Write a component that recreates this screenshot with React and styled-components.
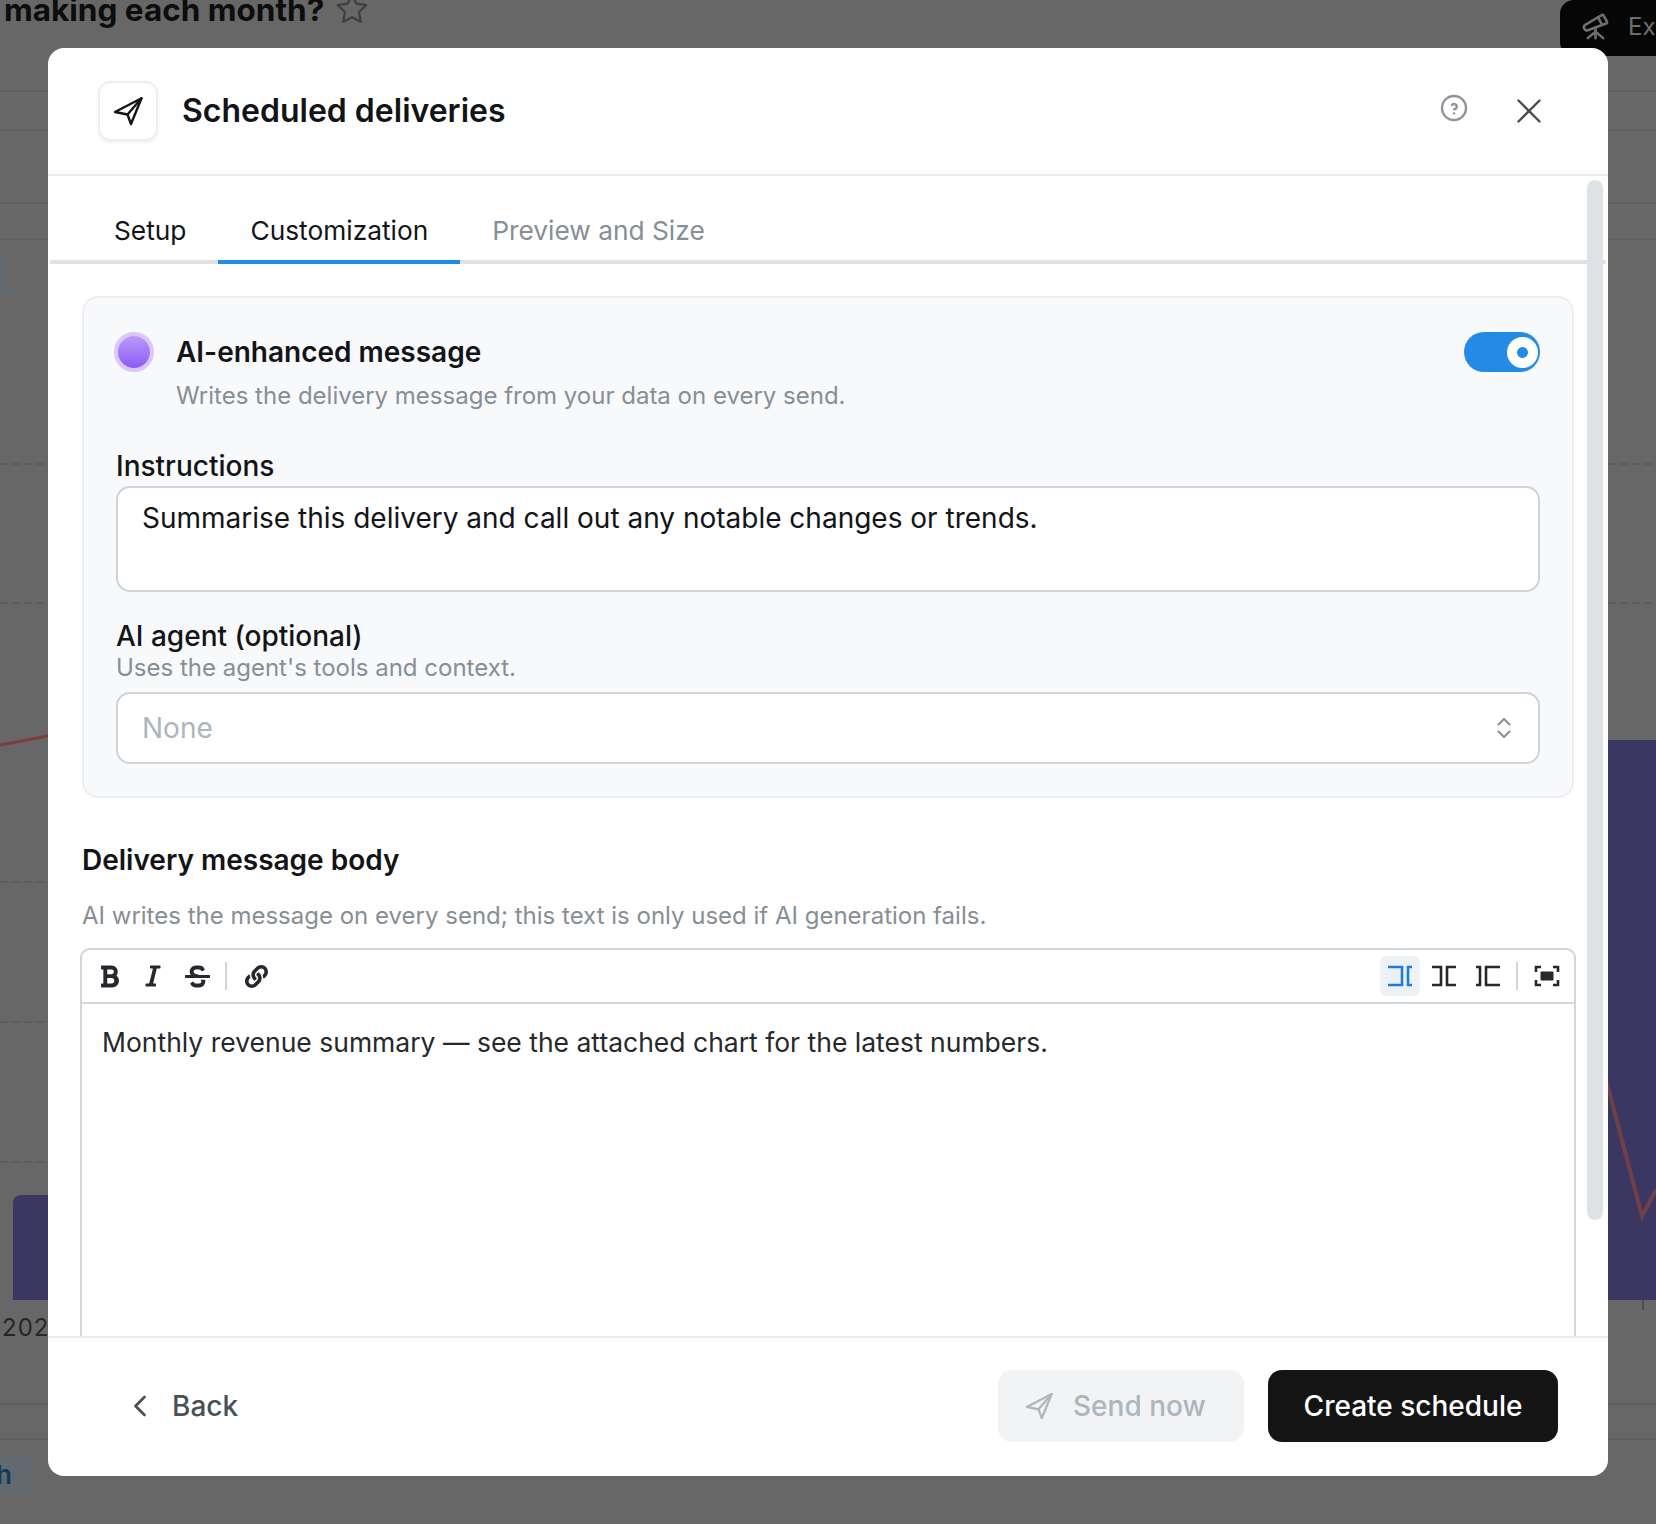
import React from 'react';
import styled, { createGlobalStyle } from 'styled-components';
import { FaBold, FaItalic, FaStrikethrough, FaLink } from 'react-icons/fa';
import { TbTelescope, TbStar, TbHelpCircle, TbX, TbChevronLeft } from 'react-icons/tb';

const GlobalStyle = createGlobalStyle`
  html, body {
    margin: 0;
    padding: 0;
    background: #676767;
  }
  * {
    box-sizing: border-box;
  }
`

const Page = styled.div`
  position: relative;
  width: 1656px;
  height: 1524px;
  overflow: hidden;
  background: #676767;
  font-family: Inter, "Noto Sans", sans-serif;
`

const TopRow = styled.div`
  height: 56px;
  display: flex;
  justify-content: space-between;
`

const PageTitle = styled.h1`
  margin: -13px 0 0 4px;
  height: 44px;
  display: flex;
  align-items: center;
  gap: 11px;
  font-size: 31.5px;
  font-weight: 700;
  color: #0d0d0d;
  white-space: nowrap;
  svg {
    color: #3f3f3f;
  }
`

const ExploreButton = styled.div`
  width: 96px;
  height: 56px;
  background: #060606;
  border-radius: 0 0 0 14px;
  border-top-left-radius: 14px;
  display: flex;
  align-items: center;
  gap: 17px;
  padding: 0 0 4px 20px;
  font-size: 24px;
  color: #6e6e6e;
`

const Chart = styled.svg`
  display: block;
  width: 1656px;
  height: 1400px;
`

const ChipRow = styled.div`
  height: 68px;
  display: flex;
  align-items: flex-start;
`

const Chip = styled.div`
  width: 34px;
  height: 39px;
  background: #62696f;
  border-radius: 0 8px 8px 0;
  font-size: 26px;
  font-weight: 600;
  line-height: 37px;
  color: #0f3a5e;
  text-indent: -4px;
  overflow: hidden;
`

const Modal = styled.div`
  position: absolute;
  top: 48px;
  left: 48px;
  width: 1560px;
  height: 1428px;
  background: #fff;
  border-radius: 16px;
  display: flex;
  flex-direction: column;
  overflow: hidden;
  color: #121417;
`

const Header = styled.header`
  height: 128px;
  flex-shrink: 0;
  display: flex;
  align-items: center;
  padding: 0 58px 0 50px;
  border-bottom: 2px solid #e9ecef;
`

const IconBox = styled.div`
  width: 60px;
  height: 60px;
  border: 2px solid #eceef0;
  border-radius: 12px;
  box-shadow: 0 2px 3px rgba(0, 0, 0, 0.06);
  display: flex;
  align-items: center;
  justify-content: center;
  flex-shrink: 0;
  color: #121417;
`

const Title = styled.h2`
  margin: -2px 0 0 24px;
  font-size: 32px;
  font-weight: 600;
  flex: 1;
`

const HeaderActions = styled.div`
  display: flex;
  align-items: center;
  gap: 38px;
`

const HelpButton = styled.span`
  display: flex;
  color: #8f9399;
  margin-top: -6px;
`

const CloseButton = styled.span`
  display: flex;
  color: #4a4d52;
`

const TabList = styled.nav`
  height: 88px;
  flex-shrink: 0;
  display: flex;
  align-items: stretch;
  margin: 0 2px;
  padding-left: 32px;
  border-bottom: 4px solid #dee2e6;
`

const Tab = styled.div`
  padding: 24px 32px 0;
  margin-bottom: -4px;
  display: flex;
  align-items: center;
  font-size: 26.3px;
  color: ${props => (props.$muted ? '#868e96' : '#121417')};
  border-bottom: 4px solid ${props => (props.$active ? '#228be6' : 'transparent')};
`

const Body = styled.div`
  flex: 1;
  min-height: 0;
  overflow: hidden;
  padding: 32px 34px 0;
`

const ScrollThumb = styled.div`
  position: absolute;
  top: 132px;
  right: 5px;
  width: 16px;
  height: 1040px;
  border-radius: 8px;
  background: #dee2e6;
`

const Card = styled.section`
  background: #f8f9fb;
  border: 2px solid #eceef1;
  border-radius: 16px;
  padding: 34px 32px 32px;
`

const AiRow = styled.div`
  display: flex;
  align-items: flex-start;
`

const Orb = styled.div`
  width: 40px;
  height: 40px;
  margin-left: -2px;
  flex-shrink: 0;
  border-radius: 50%;
  border: 4px solid #dcc6fa;
  background: linear-gradient(180deg, #bb9af6 0%, #8b5cf6 100%);
`

const AiText = styled.div`
  flex: 1;
  margin-left: 22px;
`

const AiTitle = styled.div`
  font-size: 28px;
  font-weight: 600;
  line-height: 40px;
  margin-bottom: 8px;
`

const Hint = styled.div`
  font-size: 24px;
  color: #868e96;
  line-height: ${props => props.$lh || '32px'};
`

const Toggle = styled.div`
  width: 76px;
  height: 40px;
  border-radius: 20px;
  background: #228be6;
  display: flex;
  align-items: center;
  justify-content: flex-end;
  padding-right: 2px;
  &::after {
    content: '';
    width: 31px;
    height: 31px;
    border-radius: 50%;
    background: radial-gradient(circle, #228be6 0 5px, #fff 5.8px);
  }
`

const FieldLabel = styled.div`
  font-size: 28px;
  font-weight: 500;
  line-height: 36px;
  margin-top: ${props => props.$top || '0'};
`

const TextBox = styled.div`
  height: 106px;
  margin-top: 2px;
  background: #fff;
  border: 2px solid #ced4da;
  border-radius: 14px;
  padding: 12px 24px;
  font-size: 28px;
  line-height: 36px;
`

const SelectBox = styled.div`
  height: 72px;
  margin-top: 10px;
  background: #fff;
  border: 2px solid #ced4da;
  border-radius: 14px;
  padding: 0 27px 0 24px;
  display: flex;
  align-items: center;
  justify-content: space-between;
  font-size: 28px;
  color: #adb5bd;
  svg {
    color: #868e96;
  }
`

const SectionTitle = styled.h3`
  margin: 44px 0 0;
  font-size: 28px;
  font-weight: 600;
  line-height: 36px;
`

const HelperText = styled(Hint)`
  margin-top: 22px;
`

const Editor = styled.div`
  margin: 16px -2px 0;
  height: 560px;
  border: 2px solid #d0d5da;
  border-radius: 10px 10px 0 0;
`

const Toolbar = styled.div`
  height: 54px;
  display: flex;
  align-items: center;
  justify-content: space-between;
  padding: 0 7px 0 7px;
  border-bottom: 2px solid #d0d5da;
`

const ToolGroup = styled.div`
  display: flex;
  align-items: center;
  gap: 4px;
`

const ToolButton = styled.span`
  width: 40px;
  height: 40px;
  border-radius: 6px;
  display: flex;
  align-items: center;
  justify-content: center;
  color: ${props => (props.$active ? '#1c7ed6' : '#25282c')};
  background: ${props => (props.$active ? '#edf1f6' : 'transparent')};
`

const ToolDivider = styled.span`
  width: 2px;
  height: 28px;
  margin: 0 5px 0 4px;
  background: #d0d5da;
`

const EditorText = styled.div`
  padding: 20px 20px;
  font-size: 26.5px;
  line-height: 36px;
  color: #25282c;
`

const Footer = styled.footer`
  height: 140px;
  flex-shrink: 0;
  display: flex;
  align-items: center;
  gap: 24px;
  padding: 0 50px 2px 74px;
  border-top: 2px solid #e9ecef;
`

const BackLink = styled.div`
  flex: 1;
  display: flex;
  align-items: center;
  gap: 14px;
  font-size: 28px;
  font-weight: 500;
  color: #495057;
`

const Button = styled.div`
  height: 72px;
  border-radius: 14px;
  display: flex;
  align-items: center;
  font-size: 28px;
  font-weight: 500;
`

const SendButton = styled(Button)`
  width: 246px;
  padding-left: 26px;
  gap: 19px;
  background: #f1f3f5;
  color: #adb5bd;
`

const CreateButton = styled(Button)`
  width: 290px;
  justify-content: center;
  background: #141414;
  color: #fff;
`

const SendIcon = ({ size = 32, width = 2.4 }) => (
  <svg width={size} height={size} viewBox="0 0 32 32" fill="none" stroke="currentColor" strokeWidth={width} strokeLinejoin="round" strokeLinecap="round">
    <path d="M29.5 3.3 3 17l12.5 2.5L19 29z" />
    <path d="M15.5 19.5 29.5 3.3" />
  </svg>
)

const AlignLeftWrap = () => (
  <svg width="26" height="22" viewBox="0 0 26 22" fill="none" stroke="currentColor" strokeWidth="2.6">
    <path d="M1 2h14v18H1" />
    <path d="M25 2h-4v18h4" />
  </svg>
)

const AlignCenterWrap = () => (
  <svg width="26" height="22" viewBox="0 0 26 22" fill="none" stroke="currentColor" strokeWidth="2.6">
    <path d="M1 2h9v18H1" />
    <path d="M25 2h-9v18h9" />
  </svg>
)

const AlignRightWrap = () => (
  <svg width="26" height="22" viewBox="0 0 26 22" fill="none" stroke="currentColor" strokeWidth="2.6">
    <path d="M1 2h4v18H1" />
    <path d="M25 2H11v18h14" />
  </svg>
)

const FullWidth = () => (
  <svg width="26" height="22" viewBox="0 0 26 22" fill="none" stroke="currentColor" strokeWidth="2.6">
    <path d="M2 7V2h5M19 2h5v5M24 15v5h-5M7 20H2v-5" />
    <rect x="6.5" y="6.5" width="13" height="9" rx="1" fill="currentColor" stroke="none" />
  </svg>
)

const UpDown = () => (
  <svg width="14" height="22" viewBox="0 0 14 22" fill="none" stroke="currentColor" strokeWidth="2" strokeLinecap="round" strokeLinejoin="round">
    <path d="M1.5 7.5 7 2l5.500 5.500" />
    <path d="M1.500 14.500 7 20l5.500-5.500" />
  </svg>
)

// everything behind the dialog: grid lines, bars and the series line
const BackgroundChart = () => (
  <Chart viewBox="0 56 1656 1400">
    <path d="M0 91h1656M0 130h1656M0 203h1656M0 239h1656" stroke="#606060" strokeWidth="2" />
    <rect x="-14" y="256" width="24" height="40" rx="8" fill="#62696f" />
    <path d="M0 464h1656M0 603h1656M0 882h1656M0 1022h1656M0 1162h1656" stroke="#5c5c5c" strokeWidth="1.5" strokeDasharray="8 4" />
    <path d="M13 1300v-97a8 8 0 0 1 8-8h50v105z" fill="#3b3763" />
    <path d="M1590 1300V748a8 8 0 0 1 8-8h58v560z" fill="#3b3763" />
    <path d="M0 745 48 736" stroke="#7f3d3a" strokeWidth="3" fill="none" />
    <path d="M1600 1057 1642 1216 1656 1190" stroke="#6f4046" strokeWidth="4" fill="none" />
    <path d="M1643 1300v10" stroke="#4d4d4d" strokeWidth="2" />
    <text x="2" y="1336" fontSize="24" fill="#262626" letterSpacing="1" fontFamily="Inter, sans-serif">2024</text>
    <path d="M0 1404h1656M0 1439h1656" stroke="#5f5f5f" strokeWidth="2" />
  </Chart>
)

const App = () => {
  return (
    <Page>
      <GlobalStyle />
      <TopRow>
        <PageTitle>
          making each month?
          <TbStar size={34} strokeWidth={1.6} />
        </PageTitle>
        <ExploreButton>
          <TbTelescope size={31} />
          Ex
        </ExploreButton>
      </TopRow>
      <BackgroundChart />
      <ChipRow>
        <Chip>h</Chip>
      </ChipRow>

      <Modal>
        <Header>
          <IconBox>
            <SendIcon />
          </IconBox>
          <Title>Scheduled deliveries</Title>
          <HeaderActions>
            <HelpButton>
              <TbHelpCircle size={32} strokeWidth={1.8} />
            </HelpButton>
            <CloseButton>
              <TbX size={42} strokeWidth={1.4} />
            </CloseButton>
          </HeaderActions>
        </Header>

        <TabList>
          <Tab>Setup</Tab>
          <Tab $active>Customization</Tab>
          <Tab $muted>Preview and Size</Tab>
        </TabList>

        <Body>
          <Card>
            <AiRow>
              <Orb />
              <AiText>
                <AiTitle>AI-enhanced message</AiTitle>
                <Hint>Writes the delivery message from your data on every send.</Hint>
              </AiText>
              <Toggle />
            </AiRow>
            <FieldLabel $top="36px">Instructions</FieldLabel>
            <TextBox>Summarise this delivery and call out any notable changes or trends.</TextBox>
            <FieldLabel $top="26px">AI agent (optional)</FieldLabel>
            <Hint $lh="28px">Uses the agent's tools and context.</Hint>
            <SelectBox>
              None
              <UpDown />
            </SelectBox>
          </Card>

          <SectionTitle>Delivery message body</SectionTitle>
          <HelperText>AI writes the message on every send; this text is only used if AI generation fails.</HelperText>
          <Editor>
            <Toolbar>
              <ToolGroup>
                <ToolButton><FaBold size={25} /></ToolButton>
                <ToolButton><FaItalic size={24} /></ToolButton>
                <ToolButton><FaStrikethrough size={25} /></ToolButton>
                <ToolDivider />
                <ToolButton><FaLink size={23} /></ToolButton>
              </ToolGroup>
              <ToolGroup>
                <ToolButton $active><AlignLeftWrap /></ToolButton>
                <ToolButton><AlignCenterWrap /></ToolButton>
                <ToolButton><AlignRightWrap /></ToolButton>
                <ToolDivider />
                <ToolButton><FullWidth /></ToolButton>
              </ToolGroup>
            </Toolbar>
            <EditorText>Monthly revenue summary — see the attached chart for the latest numbers.</EditorText>
          </Editor>
        </Body>

        <Footer>
          <BackLink>
            <TbChevronLeft size={36} strokeWidth={1.8} />
            Back
          </BackLink>
          <SendButton>
            <SendIcon size={30} />
            Send now
          </SendButton>
          <CreateButton>Create schedule</CreateButton>
        </Footer>
        <ScrollThumb />
      </Modal>
    </Page>
  )
}

export default App;
